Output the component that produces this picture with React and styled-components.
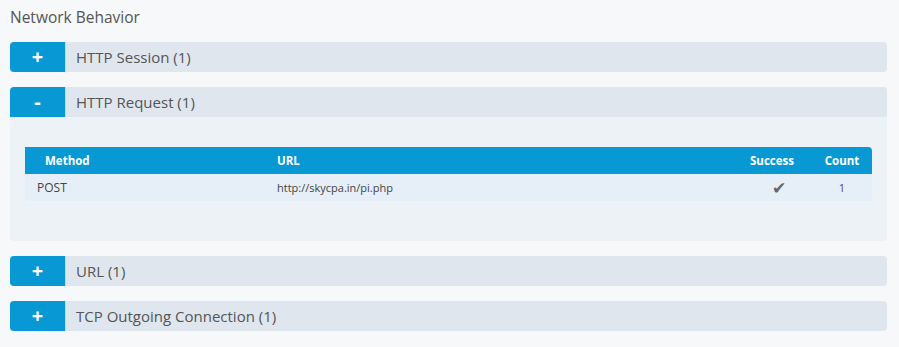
import React, { useState } from 'react';
import styled, { createGlobalStyle } from 'styled-components';

const Global = createGlobalStyle`
	body {
		margin: 0;
		background: #f6f8fa;
		font-family: "Open Sans", "Noto Sans", sans-serif;
	}
`;

const Page = styled.div`
	padding: 4px 12px 0 10px;
	display: flex;
	flex-direction: column;
`;

const Title = styled.h2`
	margin: 0 0 12px;
	font-size: 15.5px;
	font-weight: 400;
	color: #555;
	line-height: 26px;
`;

const Panel = styled.div`
	margin-bottom: 15px;
	border-radius: 4px;
	background: #edf2f6;
`;

const Header = styled.div`
	display: flex;
	align-items: center;
	height: 30px;
	background: #dfe6ee;
	border-radius: ${p => (p.open ? '4px 4px 0 0' : '4px')};
	cursor: pointer;
`;

const Toggle = styled.div`
	width: 55px;
	height: 100%;
	background: #0899d5;
	color: #fff;
	font-weight: 700;
	font-size: 20px;
	display: flex;
	align-items: center;
	justify-content: center;
	border-radius: ${p => (p.open ? '4px 0 0 0' : '4px 0 0 4px')};
	border-right: 1px solid #c9d6e2;
	line-height: 1;
`;

const Label = styled.span`
	margin-left: 10px;
	font-size: 15px;
	color: #555;
`;

const Body = styled.div`
	padding: 30px 15px 40px;
`;

const Table = styled.table`
	width: 100%;
	border-collapse: collapse;
	font-size: 11.5px;
`;

const Th = styled.th`
	background: #0899d5;
	color: #fff;
	font-weight: 700;
	height: 27px;
	text-align: ${p => p.align || 'left'};
	padding: 0 0 0 ${p => p.pl || 0}px;
	&:last-child { border-top-right-radius: 4px; }
`;

const Td = styled.td`
	background: #e6eff7;
	height: 27px;
	color: ${p => p.color || '#444'};
	text-align: ${p => p.align || 'left'};
	padding: 0 0 0 ${p => p.pl || 0}px;
	font-size: ${p => p.size || 11.5}px;
`;

const sections = [
	{ name: 'HTTP Session (1)' },
	{ name: 'HTTP Request (1)', open: true },
	{ name: 'URL (1)' },
	{ name: 'TCP Outgoing Connection (1)' },
];

const RequestTable = () => (
	<Table>
		<colgroup>
			<col style={{ width: 252 }} />
			<col />
			<col style={{ width: 80 }} />
			<col style={{ width: 60 }} />
		</colgroup>
		<thead>
			<tr>
				<Th pl={20}>Method</Th>
				<Th>URL</Th>
				<Th align="center">Success</Th>
				<Th align="center">Count</Th>
			</tr>
		</thead>
		<tbody>
			<tr>
				<Td pl={12} size={12}>POST</Td>
				<Td size={11}>http://skycpa.in/pi.php</Td>
				<Td align="center" pl={14} color="#666" size={17}>✔</Td>
				<Td align="center" color="#5b3a86" size={11}>1</Td>
			</tr>
		</tbody>
	</Table>
);

const Section = ({ name, open: initial }) => {
	const [open, setOpen] = useState(!!initial);
	return (
		<Panel>
			<Header open={open} onClick={() => setOpen(!open)}>
				<Toggle open={open}>{open ? '-' : '+'}</Toggle>
				<Label>{name}</Label>
			</Header>
			{open && (
				<Body>
					<RequestTable />
				</Body>
			)}
		</Panel>
	);
};

const App = () => (
	<>
		<Global />
		<Page>
			<Title>Network Behavior</Title>
			{sections.map(s => (
				<Section key={s.name} {...s} />
			))}
		</Page>
	</>
);

export default App;
